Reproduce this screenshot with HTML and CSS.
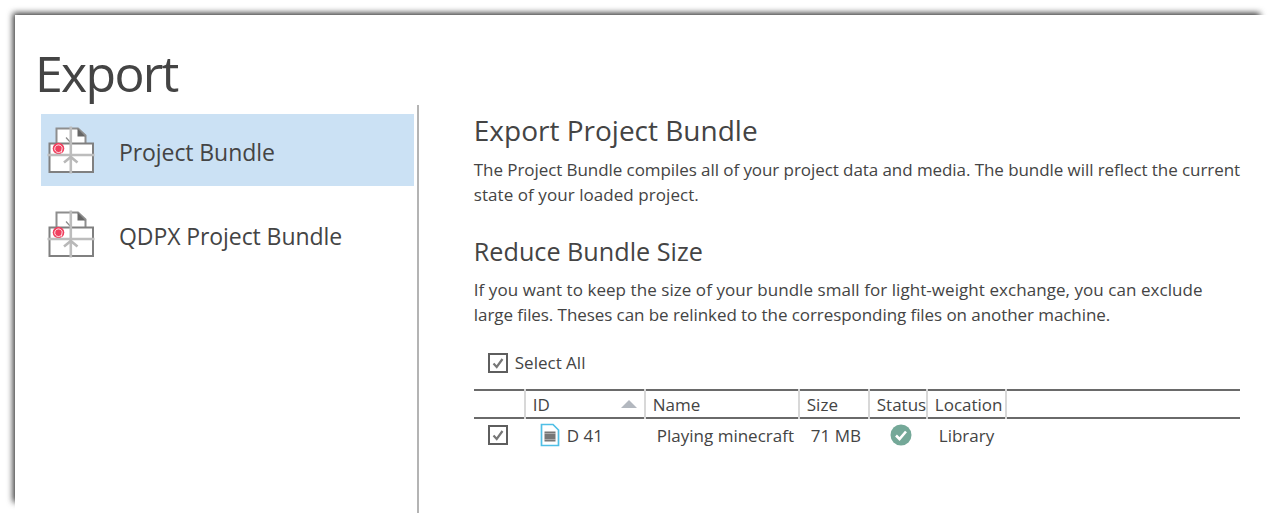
FILE: index.html
```html
<!DOCTYPE html>
<html lang="en">
<head>
<meta charset="utf-8">
<title>Export</title>
<link rel="stylesheet" href="styles.css">
</head>
<body>
<svg class="defs" width="0" height="0">
  <symbol id="bundle" viewBox="0 0 48 48">
    <path d="M9.500 17V2.500H31L38.500 9.500V17" fill="#fff" stroke="#8e8e8e" stroke-width="2"/>
    <path d="M30.500 2.500L38.500 10.500H30.500Z" fill="#666"/>
    <path d="M2.500 46V17.500H46V46Z" fill="#fff" stroke="#808080" stroke-width="2"/>
    <path d="M19 11.500L24 17" stroke="#8a8a8a" stroke-width="1.200" fill="none"/>
    <circle cx="11.500" cy="22.500" r="5.800" fill="#f0405f"/>
    <path d="M14.400 25.200A3.800 3.800 0 1 1 15.200 21.800L14.400 26.500" fill="none" stroke="#fff" stroke-width="1" stroke-opacity="0.850"/>
    <path d="M23.800 0.500V47.500M0.500 29H47.500" stroke="#bdbdbd" stroke-width="2.600" fill="none"/>
    <path d="M17 36.500L23.800 31L30.500 36.500" stroke="#b8b8b8" stroke-width="2.600" fill="none"/>
  </symbol>
  <symbol id="check" viewBox="0 0 20 20">
    <rect x="1" y="1" width="18" height="18" fill="#fff" stroke="#5e5e5e" stroke-width="2"/>
    <path d="M5.500 10.500L8.700 14L14.500 6" fill="none" stroke="#777" stroke-width="2.200"/>
  </symbol>
</svg>
<div class="shadow"></div>
<div class="window">
  <h1 class="title">Export</h1>
  <div class="columns">
    <nav class="sidebar">
      <div class="item selected">
        <svg class="item-icon"><use href="#bundle"/></svg>
        <span class="item-label">Project Bundle</span>
      </div>
      <div class="item">
        <svg class="item-icon"><use href="#bundle"/></svg>
        <span class="item-label">QDPX Project Bundle</span>
      </div>
    </nav>
    <main class="content">
      <h2 class="heading">Export Project Bundle</h2>
      <p class="para">The Project Bundle compiles all of your project data and media. The bundle will reflect the current<br><span class="loose">state of your loaded project.</span></p>
      <h2 class="heading second">Reduce Bundle Size</h2>
      <p class="para"><span class="loose">If you want to keep the size of your bundle small for light-weight exchange, you can exclude</span><br>large files. Theses can be relinked to the corresponding files on another machine.</p>
      <label class="select-all">
        <svg class="checkbox"><use href="#check"/></svg>
        <span>Select All</span>
      </label>
      <div class="table">
        <div class="thead">
          <div class="th"></div>
          <div class="th id-head"><span>ID</span><i class="sort"></i></div>
          <div class="th">Name</div>
          <div class="th">Size</div>
          <div class="th">Status</div>
          <div class="th">Location</div>
          <div class="th last"></div>
        </div>
        <div class="tbody">
          <div class="td center"><svg class="checkbox"><use href="#check"/></svg></div>
          <div class="td id-cell">
            <svg class="file" viewBox="0 0 20 24">
              <path d="M1.500 1.500H13L18.500 7V22.500H1.500Z" fill="#fff" stroke="#4fbfe6" stroke-width="1.700"/>
              <rect x="4.500" y="8.500" width="11" height="10" fill="#777"/>
              <path d="M4.500 10.500H15.500M4.500 16.500H15.500" stroke="#ddd" stroke-width="1" stroke-dasharray="1 1"/>
            </svg>
            <span>D 41</span>
          </div>
          <div class="td name">Playing minecraft</div>
          <div class="td size">71 MB</div>
          <div class="td center">
            <svg class="status" viewBox="0 0 22 22">
              <circle cx="11" cy="11" r="10.500" fill="#74a898"/>
              <path d="M6 11.500L9.500 15L16 7.500" fill="none" stroke="#fff" stroke-width="2.600"/>
            </svg>
          </div>
          <div class="td loc">Library</div>
        </div>
      </div>
    </main>
  </div>
</div>
</body>
</html>
```
FILE: styles.css
```css
* { box-sizing: border-box; }
html, body { margin: 0; padding: 0; }
body {
  width: 1274px;
  height: 513px;
  overflow: hidden;
  position: relative;
  background: #fff;
  color: #444;
  font-family: "Open Sans", "Noto Sans", sans-serif;
}
.defs { position: absolute; }
.shadow {
  position: absolute;
  left: 13px;
  top: 13px;
  width: 1247px;
  height: 489px;
  background: #333;
  filter: blur(3px);
}
.window {
  position: relative;
  margin: 15px 0 0 15px;
  width: 1259px;
  height: 498px;
  background: #fff;
  display: flex;
  flex-direction: column;
}
.title {
  margin: 0;
  padding: 26px 0 0 20px;
  height: 90px;
  font-size: 50px;
  line-height: 64px;
  font-weight: 400;
  letter-spacing: -1.700px;
}
.columns { display: flex; flex: 1; }
.sidebar {
  width: 404px;
  padding: 9px 3px 0 26px;
  border-right: 2px solid #b4b4b4;
  display: flex;
  flex-direction: column;
  gap: 12px;
}
.item {
  height: 72px;
  display: flex;
  align-items: center;
  padding-left: 6px;
  font-size: 23px;
  letter-spacing: -0.080px;
}
.item-label { padding-top: 3px; }
.item.selected { background: #cbe1f4; }
.item-icon { width: 48px; height: 48px; margin-right: 24px; flex: none; }
.content { padding: 7px 34px 0 55px; flex: 1; }
.heading {
  margin: 0;
  font-size: 28px;
  line-height: 36px;
  font-weight: 400;
}
.second { margin-top: 27px; font-size: 25.200px; line-height: 34px; }
.para {
  margin: 9px 0 0;
  font-size: 17px;
  line-height: 25px;
  letter-spacing: -0.070px;
  white-space: nowrap;
}
.loose { letter-spacing: 0.060px; }
.select-all {
  display: flex;
  align-items: center;
  gap: 7px;
  margin: 24px 0 0 14px;
  font-size: 17px;
  line-height: 24px;
}
.checkbox { width: 20px; height: 20px; display: block; flex: none; }
.table { margin-top: 14px; font-size: 17px; }
.thead {
  display: grid;
  grid-template-columns: 52px 120px 154px 70px 58px 79px 1fr;
  height: 30px;
  border-top: 2px solid #6a6a6a;
  border-bottom: 2px solid #6a6a6a;
}
.th {
  padding-left: 7px;
  line-height: 27px;
  border-right: 2px solid #d8d8d8;
  margin-top: -2px;
  margin-bottom: -2px;
  padding-top: 2px;
  white-space: nowrap;
}
.th.last { border-right: 0; }
.id-head { display: flex; justify-content: space-between; align-items: center; padding: 0 7px 0 7px; }
.sort {
  width: 0;
  height: 0;
  border-left: 8px solid transparent;
  border-right: 8px solid transparent;
  border-bottom: 8px solid #b3b8bf;
}
.tbody {
  display: grid;
  grid-template-columns: 48px 119px 154px 70px 72px 1fr;
  height: 30px;
  margin-top: 1px;
  align-items: center;
}
.td { white-space: nowrap; }
.center { display: flex; justify-content: center; }
.id-cell { display: flex; align-items: center; gap: 7px; padding-left: 18px; }
.file { width: 20px; height: 24px; flex: none; }
.name { padding-left: 16px; }
.size { padding-left: 16px; }
.loc { padding-left: 2px; }
.status { width: 22px; height: 22px; display: block; }
```
